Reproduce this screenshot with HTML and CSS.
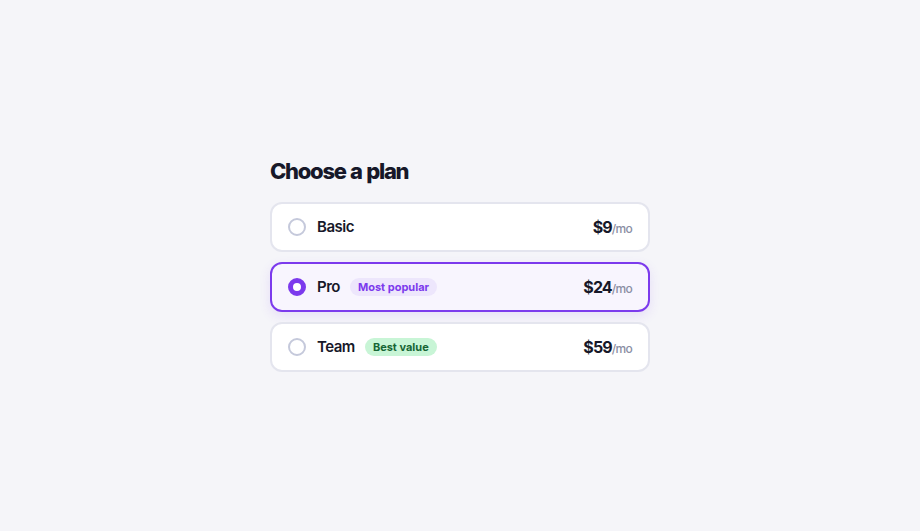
FILE: index.html
```html
<!DOCTYPE html>
<html lang="en">
<head>
<meta charset="utf-8">
<title>Choose a plan</title>
<link rel="stylesheet" href="styles.css">
</head>
<body>
<main class="page">
  <section class="plans">
    <h1 class="title">Choose a plan</h1>
    <div class="list">
      <label class="plan">
        <span class="radio"></span>
        <span class="name">Basic</span>
        <span class="price"><b>$9</b><span class="per">/mo</span></span>
      </label>
      <label class="plan selected">
        <span class="radio"></span>
        <span class="name">Pro</span>
        <span class="badge purple">Most popular</span>
        <span class="price"><b>$24</b><span class="per">/mo</span></span>
      </label>
      <label class="plan">
        <span class="radio"></span>
        <span class="name">Team</span>
        <span class="badge green">Best value</span>
        <span class="price"><b>$59</b><span class="per">/mo</span></span>
      </label>
    </div>
  </section>
</main>
</body>
</html>
```

FILE: styles.css
```css
* { box-sizing: border-box; }
html, body { margin: 0; height: 100%; }
body {
  background: #f5f5f9;
  font-family: Inter, "Noto Sans", sans-serif;
  color: #171829;
}
.page {
  min-height: 100%;
  display: flex;
  align-items: center;
  justify-content: center;
}
.plans { width: 380px; }
.title {
  margin: 0 0 20px;
  font-size: 22px;
  font-weight: 800;
  letter-spacing: -1.3px;
  word-spacing: 1px;
  line-height: 22px;
  color: #171829;
}
.list { display: flex; flex-direction: column; gap: 10px; }
.plan {
  display: flex;
  align-items: center;
  height: 50px;
  padding: 0 16px;
  background: #ffffff;
  border: 2px solid #e4e5ee;
  border-radius: 12px;
}
.plan.selected {
  background: #f8f5fe;
  border-color: #7c3aed;
  box-shadow: 0 4px 12px rgba(124, 58, 237, 0.12);
}
.radio {
  width: 18px;
  height: 18px;
  border-radius: 50%;
  border: 2px solid #c5c9db;
  background: #fff;
  flex: none;
}
.selected .radio {
  border: 5.5px solid #7c3aed;
}
.name {
  margin-left: 11px;
  font-size: 15px;
  font-weight: 600;
  letter-spacing: -0.5px;
  color: #171829;
}
.badge {
  margin-left: 10px;
  height: 18px;
  line-height: 18px;
  padding: 0 8px;
  border-radius: 9px;
  font-size: 11px;
  font-weight: 700;
  letter-spacing: 0;
}
.badge.purple { background: #ede6fc; color: #7c3aed; }
.badge.green { background: #c8f5d6; color: #166534; }
.price { margin-left: auto; display: flex; align-items: baseline; }
.price b { font-size: 16px; font-weight: 700; letter-spacing: -0.9px; color: #171829; }
.per { font-size: 12px; letter-spacing: -0.7px; color: #8a8ea3; font-weight: 500; }
```
